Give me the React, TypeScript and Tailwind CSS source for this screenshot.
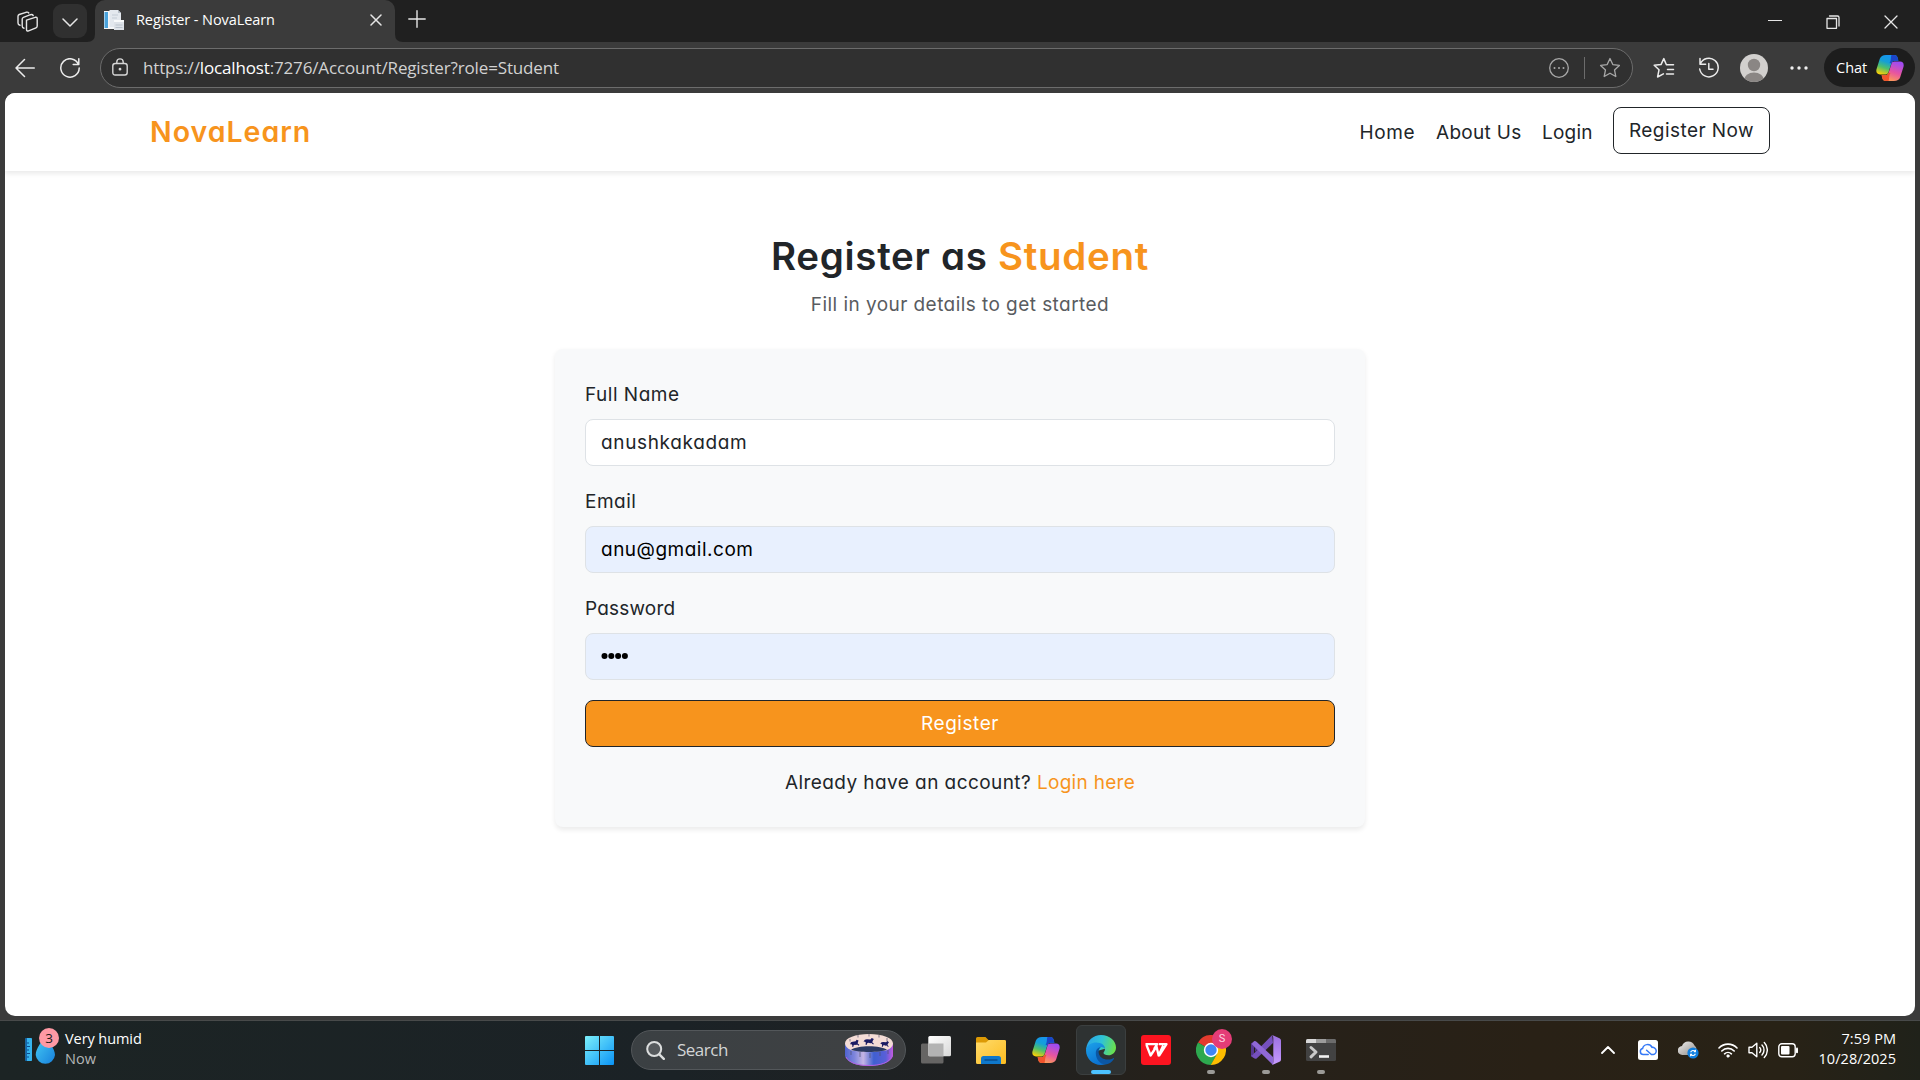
import React from "react";

const line = {
  fill: "none",
  stroke: "currentColor",
  strokeLinecap: "round" as const,
  strokeLinejoin: "round" as const,
};

function CopilotLogo({ id, className }: { id: string; className: string }) {
  const leg =
    "M10 0H18C20.3 0 21.2 1.2 21.7 3L22.4 5.8H18.6C16.8 5.8 15.8 6.8 15.3 8.4L12.6 17C12.1 18.6 11.2 19.4 9.8 19.4H4C.9 19.4 -.2 17.2 .5 14.2L3.8 3.8C4.7 1.3 6.8 0 10 0Z";
  return (
    <svg viewBox="0 0 28 26" className={className}>
      <defs>
        <linearGradient id={id + "a"} x1="0.6" y1="0" x2="0.2" y2="1">
          <stop offset="0" stopColor="#1793f0" />
          <stop offset="0.35" stopColor="#149fd8" />
          <stop offset="0.65" stopColor="#4fc06b" />
          <stop offset="1" stopColor="#ffd004" />
        </linearGradient>
        <linearGradient id={id + "b"} x1="0.4" y1="1" x2="0.8" y2="0">
          <stop offset="0" stopColor="#a04bf2" />
          <stop offset="0.5" stopColor="#e8559f" />
          <stop offset="1" stopColor="#ffa64d" />
        </linearGradient>
      </defs>
      <path d={leg} fill={`url(#${id}a)`} />
      <path d="M15.5 0H18C20.3 0 21.2 1.2 21.7 3L22.4 5.8H18.6C17 5.8 16 6.6 15.4 8.2L13.6 8C15.5 5 14.5 1.5 15.5 0Z" fill="#1b45c9" />
      <g transform="rotate(180 14 13)">
        <path d={leg} fill={`url(#${id}b)`} />
        <path d="M15.5 0H18C20.3 0 21.2 1.2 21.7 3L22.4 5.8H18.6C17 5.8 16 6.6 15.4 8.2L13.6 8C15.5 5 14.5 1.5 15.5 0Z" fill="#f2542d" />
      </g>
    </svg>
  );
}

function TabStrip() {
  return (
    <div className="flex h-[42px] items-start bg-[#202020] text-[#e6e6e6]">
      <svg viewBox="0 0 22 22" className="ml-[17px] mt-[11px] h-[22px] w-[22px]" {...line} strokeWidth="1.4">
        <path d="M9.5 9.2 18.2 6.3Q20.2 5.8 20.2 7.8V15Q20.2 16.3 19 16.8L11.6 19.8Q9.5 20.5 9.5 18.5Z" />
        <path d="M7 17.2Q5.2 16.8 5.2 15V8Q5.2 6.8 6.4 6.3L13.5 3.7Q15.6 3.2 16.2 4.6" />
        <path d="M3 14.3Q1 14 1 12V5.3Q1 4 2.2 3.5L9 1.3Q11 .8 11.8 2" />
      </svg>
      <div className="ml-[14px] mt-1 flex h-[34px] w-[34px] items-center justify-center rounded-[9px] bg-[#303030]">
        <svg viewBox="0 0 16 9" className="mt-[2px] h-[9px] w-4" {...line} strokeWidth="1.5">
          <path d="M1 1 8 8 15 1" />
        </svg>
      </div>
      <svg viewBox="0 0 8 8" className="h-2 w-2 self-end"><path d="M8 0V8H0Q8 8 8 0Z" fill="#3b3b3b" /></svg>
      <div className="flex h-[42px] w-[300px] rounded-t-[10px] bg-[#3b3b3b]">
        <svg viewBox="0 0 20 20" className="ml-[9px] mt-[10px] h-5 w-5">
          <path d="M0 1H12V19H0Z" fill="#f4f6f8" />
          <path d="M0.5 2H4V18H0.5Z" fill="#4aa3dc" />
          <path d="M5.5 0H14L17 3V17H5.5Z" fill="#e3e8ee" />
          <path d="M14 0V3H17Z" fill="#b7c0ca" />
          <path d="M8 5H14M8 8H13" stroke="#c3ccd6" />
          <path d="M10 10H20V20H10Z" fill="#dde2e8" />
          <path d="M10 10H20V12H10Z" fill="#f8fafb" />
          <path d="M11.5 15H18.5M11.5 17.5H18.5" stroke="#b9c2cc" />
        </svg>
        <div className="ml-3 mt-[10px] flex-1 whitespace-nowrap font-['Open_Sans',sans-serif] text-[14.5px] leading-5 tracking-[-0.08px] text-white">Register - NovaLearn</div>
        <svg viewBox="0 0 12 12" className="mr-[13px] mt-[14px] h-3 w-3" {...line} strokeWidth="1.5">
          <path d="M1 1 11 11M11 1 1 11" />
        </svg>
      </div>
      <svg viewBox="0 0 8 8" className="h-2 w-2 self-end"><path d="M0 0V8H8Q0 8 0 0Z" fill="#3b3b3b" /></svg>
      <svg viewBox="0 0 18 18" className="ml-[5px] mt-[10px] h-[18px] w-[18px]" {...line} strokeWidth="1.4">
        <path d="M9 .8V17.2M.8 9H17.2" />
      </svg>
      <div className="flex-1" />
      <svg viewBox="0 0 14 14" className="mr-[44px] mt-[14px] h-[14px] w-[14px]" {...line} strokeWidth="1.2"><path d="M.5 6.5H13.5" /></svg>
      <svg viewBox="0 0 14 14" className="mr-[44px] mt-[15px] h-[14px] w-[14px]" {...line} strokeWidth="1.3">
        <path d="M1 3.5H10.5V13.3H1ZM3.5 1H11.5Q13 1 13 2.5V11" />
      </svg>
      <svg viewBox="0 0 14 14" className="mr-[22px] mt-[15px] h-[14px] w-[14px]" {...line} strokeWidth="1.3"><path d="M1 1 13 13M13 1 1 13" /></svg>
    </div>
  );
}

const STAR = "M11 1.5 13.8 7.6 20.4 8.4 15.5 12.9 16.8 19.5 11 16.2 5.2 19.5 6.5 12.9 1.6 8.4 8.2 7.6Z";

function AddressBar() {
  return (
    <div className="flex h-[51px] items-center bg-[#3b3b3b] text-[#ececec]">
      <svg viewBox="0 0 20 20" className="ml-[15px] h-5 w-5" {...line} strokeWidth="1.5"><path d="M19.3 10H1M9.5 1.5 1 10 9.5 18.5" /></svg>
      <svg viewBox="0 0 20 20" className="ml-[25px] h-5 w-5" {...line} strokeWidth="1.5"><path d="M18.5 6.4A9.2 9.2 0 1 0 19.2 10M18.8 .8V6.4H13.2" /></svg>
      <div className="ml-5 flex h-10 w-[1533px] items-center rounded-full border border-[#6c6c6c] bg-[#303030] text-[#d6d6d6]">
        <svg viewBox="0 0 16 18" className="mb-[2px] ml-[11px] h-[18px] w-4" {...line} strokeWidth="1.4">
          <path d="M3.2 5.5H12.8Q15.2 5.5 15.2 8V14.5Q15.2 17 12.8 17H3.2Q.8 17 .8 14.5V8Q.8 5.5 3.2 5.5ZM4.8 5.5V4Q4.8 .9 8 .9T11.2 4V5.5" />
          <circle cx="8" cy="11.2" r="0.7" fill="currentColor" />
        </svg>
        <div className="ml-[15px] flex-1 whitespace-nowrap font-['Open_Sans',sans-serif] text-[17px] leading-6 tracking-[-0.15px] text-[#d2d2d2]">
          https://<span className="text-white">localhost</span>:7276/Account/Register?role=Student
        </div>
        <svg viewBox="0 0 20 20" className="h-5 w-5 text-[#a8a8a8]" {...line} strokeWidth="1.3">
          <circle cx="10" cy="10" r="9.3" />
          <path d="M5.5 10h.01M10 10h.01M14.5 10h.01" strokeWidth="2" />
        </svg>
        <div className="ml-[15px] h-[22px] w-px bg-[#6c6c6c]" />
        <svg viewBox="0 0 22 21" className="ml-[14px] mr-[11px] h-[21px] w-[22px] text-[#a8a8a8]" {...line} strokeWidth="1.3"><path d={STAR} /></svg>
      </div>
      <svg viewBox="0 0 22 22" className="ml-5 h-[22px] w-[22px]" {...line} strokeWidth="1.5">
        <path d="M13.6 7.8H20.5M14.5 12.4H20.5M13.5 17H20.5M13.4 7.8 10.8 1.6 8 7.6 1.2 8.3 6 12.8 4.6 20 10.4 16.8" />
      </svg>
      <svg viewBox="0 0 22 22" className="ml-[23px] h-[22px] w-[22px]" {...line} strokeWidth="1.5">
        <path d="M2.2 7.2A9.3 9.3 0 1 1 1.7 12M2 1.6V7.2H7.6M10.8 6.5V12.2H15" />
      </svg>
      <svg viewBox="0 0 28 28" className="ml-5 h-7 w-7">
        <clipPath id="avatar"><circle cx="14" cy="14" r="14" /></clipPath>
        <g clipPath="url(#avatar)">
          <rect width="28" height="28" fill="#d2d0ce" />
          <circle cx="14" cy="11" r="6.2" fill="#8a8684" />
          <ellipse cx="14" cy="26.5" rx="10" ry="8" fill="#8a8684" />
        </g>
      </svg>
      <svg viewBox="0 0 18 4" className="ml-[22px] h-1 w-[18px] fill-[#f0f0f0]"><circle cx="2" cy="2" r="1.7" /><circle cx="9" cy="2" r="1.7" /><circle cx="16" cy="2" r="1.7" /></svg>
      <div className="ml-4 flex h-[39px] w-[91px] items-center rounded-full bg-[#1d1d1d]">
        <span className="ml-3 w-10 font-['Open_Sans',sans-serif] text-[14.5px] text-white">Chat</span>
        <CopilotLogo id="chat" className="h-[26px] w-7" />
      </div>
    </div>
  );
}

function Navbar() {
  return (
    <nav className="flex h-[78px] items-start bg-white px-[145px] shadow-[0_2.5px_5px_rgba(0,0,0,0.09)]">
      <div className="mt-[20px] text-[28.5px] font-semibold leading-[38px] tracking-[1px] text-[#f7941d]">NovaLearn</div>
      <div className="ml-auto flex text-[19px] text-[#212529]">
        <span className="mt-[25px] w-[76.5px] leading-[30px] tracking-[0.6px]">Home</span>
        <span className="mt-[25px] w-[106px] leading-[30px] tracking-[0.3px]">About Us</span>
        <span className="mt-[25px] w-[71px] leading-[30px] tracking-[0.2px]">Login</span>
        <span className="mt-[14px] flex h-[47px] w-[157px] items-center justify-center rounded-[8px] border border-[#212529] pt-[2px] tracking-[0.45px]">Register Now</span>
      </div>
    </nav>
  );
}

function Field({ label, value, tracking, filled }: { label: string; value: string; tracking: string; filled?: boolean }) {
  return (
    <div className="mb-5">
      <div className={"mb-[9px] pt-px leading-[30px] " + (label === "Password" ? "tracking-[0.18px]" : "tracking-[0.5px]")}>{label}</div>
      <div className={"flex h-[47px] items-center rounded-[8px] border border-[#dee2e6] px-[15px] pt-[2px] " + tracking + (filled ? " bg-[#e8f0fe] text-black" : " bg-white")}>
        {value === "" ? (
          <svg viewBox="0 0 28 8" className="mb-[3px] h-2 w-7"><circle cx="3.5" cy="4" r="3" /><circle cx="10.3" cy="4" r="3" /><circle cx="17.1" cy="4" r="3" /><circle cx="23.9" cy="4" r="3" /></svg>
        ) : value}
      </div>
    </div>
  );
}

function RegisterPage() {
  return (
    <div className="mx-[5px] flex h-[923px] flex-col overflow-hidden rounded-[10px] bg-white font-[Inter,sans-serif] [font-feature-settings:'cv11'] font-[370]">
      <Navbar />
      <main className="flex flex-col items-center pt-[60px] text-[19px] text-[#212529]">
        <h1 className="mb-[9px] pt-px text-[38.5px] font-semibold leading-[48px] tracking-[0.7px]">
          Register as <span className="text-[#f7941d]">Student</span>
        </h1>
        <p className="mb-[29px] pt-px leading-[30px] tracking-[0.44px] text-[#595c5f]">Fill in your details to get started</p>
        <section className="w-[810px] rounded-[8px] bg-[#f8f9fa] p-[30px] shadow-[0_2.5px_5px_rgba(0,0,0,0.08)]">
          <Field label="Full Name" value="anushkakadam" tracking="tracking-[0.65px]" />
          <Field label="Email" value="anu@gmail.com" tracking="tracking-[0.5px]" filled />
          <Field label="Password" value="" tracking="" filled />
          <div className="mb-5 flex h-[47px] items-center justify-center rounded-[8px] border border-[#212529] bg-[#f7941d] pt-[2px] tracking-[0.55px] text-white">Register</div>
          <p className="-mb-px pt-px text-center leading-[30px] tracking-[0.43px]">
            Already have an account? <span className="tracking-[0.3px] text-[#f7941d]">Login here</span>
          </p>
        </section>
      </main>
    </div>
  );
}

function EdgeLogo() {
  return (
    <svg viewBox="0 0 30 30" className="h-[30px] w-[30px]">
      <defs>
        <linearGradient id="eg1" x1="0" y1="0.3" x2="1" y2="0.5"><stop offset="0" stopColor="#2aa5e8" /><stop offset="0.5" stopColor="#2fc3d6" /><stop offset="1" stopColor="#6be04c" /></linearGradient>
        <linearGradient id="eg2" x1="0.2" y1="0" x2="0.7" y2="1"><stop offset="0" stopColor="#1b9ee8" /><stop offset="1" stopColor="#0a6fd0" /></linearGradient>
      </defs>
      <path d="M.2 14C1 5.5 7.3 0 15 0 23.5 0 30 5.8 30 12.4 30 17 26.5 20.2 22.3 20.2 19.4 20.2 17.5 19.2 17.5 18.1 17.5 17 19 16.4 19 13.8L11 16Z" fill="url(#eg1)" />
      <path d="M.1 14C1.5 10 5.5 7.6 10.3 7.6 15.4 7.6 19 10.5 19 13.8 17.8 12.3 16 11.6 14.5 12 12 14 11.5 17 12.5 20L19.3 29.3C18 29.8 16.5 30 15 30 6 30-.8 22.5.1 14Z" fill="url(#eg2)" />
      <path d="M9.8 18.3C9.8 14.8 11.8 12.4 14.8 12 13.2 13.5 12.6 15.2 12.6 17 12.6 21.5 17 24.6 21.7 24.6 24.2 24.6 26 23.8 27.2 23.2 27.9 22.9 28.3 23.2 27.9 23.9 25.9 27 22.6 29.3 19.3 29.4 13.7 29.4 9.8 23.8 9.8 18.3Z" fill="#0b57a5" />
    </svg>
  );
}

function ChromeLogo() {
  return (
    <div className="relative h-[30px] w-[30px]">
      <svg viewBox="0 0 30 30" className="h-[30px] w-[30px]">
        <path d="M15 15 2 7.5A15 15 0 0 1 28 7.5Z" fill="#e33b2e" />
        <path d="M15 15 2 7.5A15 15 0 0 0 15 30L21.2 18.6Z" fill="#2da94f" />
        <path d="M15 8H28.3A15 15 0 0 1 14.8 30L21.2 18.5Z" fill="#fdbd00" />
        <path d="M15 8H28.3L28 7.5 15 7Z" fill="#e33b2e" />
        <circle cx="15" cy="15" r="7.2" fill="#fff" />
        <circle cx="15" cy="15" r="5.7" fill="#3f86f5" />
      </svg>
      <div className="absolute left-4 top-[-6px] flex h-5 w-5 items-center justify-center rounded-full bg-[#e43c77] font-[Roboto,sans-serif] text-[11px] text-[#ffd5e3]">S</div>
    </div>
  );
}

function VisualStudioLogo() {
  return (
    <svg viewBox="0 0 30 30" className="h-[30px] w-[30px]">
      <defs><linearGradient id="vsg" x1="0" y1="0" x2="0" y2="1"><stop offset="0" stopColor="#9a6fe0" /><stop offset="1" stopColor="#c79bff" /></linearGradient></defs>
      <path d="M0 8.2 3.2 6.4 9 12.2 4 17V12L3 13V17.5L5.5 20 3.2 23.2 0 21.5Z" fill="#54368f" />
      <path d="M21.2 0 22 8 5.6 23.5Q4 24.4 2.6 22.8L0 20.4 1.3 20.2Z" fill="#7550bd" />
      <path d="M3 6.2Q4.3 5.7 5.5 6.8L22 22V30L.6 9Z" fill="#8f68d6" />
      <path d="M21.2 0 28.5 3.3Q30 4 30 5.6V24.4Q30 26 28.5 26.7L21.2 30Q22.3 28.8 22.3 27V3Q22.3 1.2 21.2 0Z" fill="url(#vsg)" />
    </svg>
  );
}

function CarouselArt() {
  const horse = "M0 3.4 1.2 1.6 3 1.2 6 1.4 7.2 0 9 1 8.2 2.4 7.6 4 9 5.4 8.4 6.2 6.8 4.8 5.8 5 4.6 4.6 3.4 4.8 2.6 6.6 1.8 6.4 2 4.4 1.4 3.6Z";
  return (
    <svg viewBox="0 0 48 32" className="h-8 w-12">
      <defs>
        <linearGradient id="ring"><stop offset="0" stopColor="#4f63d0" /><stop offset="0.2" stopColor="#7f86dc" /><stop offset="0.38" stopColor="#c5b5e4" /><stop offset="0.6" stopColor="#3f5fd0" /><stop offset="0.85" stopColor="#5a5fd8" /><stop offset="1" stopColor="#c25be0" /></linearGradient>
      </defs>
      <path d="M0 9V22C2 28.5 12 32 24 32S46 28.5 48 22V9Z" fill="url(#ring)" />
      <path d="M1 23C4 29 13 31.5 24 31.5S44 29 47.3 22" fill="none" stroke="#b55fe0" strokeWidth="1" />
      <path d="M0 9.3C0 4 10.5 0 24 0S48 4 48 9.3C48 12 46 14.6 42 16 36 18.4 12 18.4 6 16 2 14.6 0 12 0 9.3Z" fill="#f4dcd6" />
      <path d="M6 15.8C12 11 36 11 42 15.8 35 18.8 13 18.8 6 15.8Z" fill="#2b3a63" />
      <path d="M13 1V3.5M24 0V2.5M34 1V3.5M42 4V7M5 5V7.5M6 17V21M15 18V23M25 19V24M35 18V22M43 16V20" stroke="#50506e" strokeWidth="0.7" />
      <g fill="#1b1b63">
        <path d={horse} transform="translate(4.5 7) rotate(-10)" />
        <path d={horse} transform="translate(18.5 4) scale(1.15 1.05)" />
        <path d={horse} transform="translate(35.5 6.6) rotate(4) scale(0.95)" />
      </g>
    </svg>
  );
}

function Slot({ children, active, mark }: { children: React.ReactNode; active?: boolean; mark?: boolean }) {
  return (
    <div className={"relative mr-[5px] flex h-[50px] w-[50px] items-center justify-center rounded-[6px] border " + (active ? "border-[#3b3f3f] bg-[#2e3232]" : "border-transparent")}>
      {children}
      {active && <span className="absolute bottom-0 h-1 w-5 rounded-full bg-[#4cc2ff]" />}
      {mark && <span className="absolute bottom-0 h-1 w-2 rounded-full bg-[#9b9a97]" />}
    </div>
  );
}

function Taskbar() {
  return (
    <div className="flex h-[60px] items-center border-t border-[#484a4a] bg-[linear-gradient(90deg,#1c2424_0%,#1b2226_35%,#1f2122_50%,#25211b_60%,#292116_80%,#282216_93%,#20221a_100%)] pb-px font-['Open_Sans',sans-serif] text-[14.5px] leading-5 text-white">
      <div className="flex w-[585px] items-center">
        <div className="relative ml-[25px] h-[38px] w-[35px]">
          <svg viewBox="0 0 35 38" className="h-[38px] w-[35px]">
            <defs><linearGradient id="drop" x1="0" y1="0" x2="1" y2="1"><stop offset="0" stopColor="#46cdf5" /><stop offset="1" stopColor="#1780dc" /></linearGradient></defs>
            <rect x="0.5" y="7" width="6.5" height="23" rx="0.8" fill="#36b4ee" />
            <path d="M.5 7H2V30H.5Z" fill="#1465ad" />
            <path d="M2 12H4M2 15.5H5M2 19H4M2 22.5H5M2 26H4" stroke="#0d4f8f" strokeWidth="1" />
            <path d="M20.5 5C23 10 30 17.5 30 24A9.7 9.7 0 0 1 10.7 24C10.7 17.5 17 10 20.5 5Z" fill="url(#drop)" />
          </svg>
          <div className="absolute left-[14px] top-[-3px] flex h-5 w-5 items-center justify-center rounded-full bg-[#ff99a4] text-[13.5px] text-[#1b1b1b]">3</div>
        </div>
        <div className="mb-[2px] ml-[5px] whitespace-nowrap">
          <div className="tracking-[-0.08px]">Very humid</div>
          <div className="text-[#b4b6b6]">Now</div>
        </div>
      </div>
      <svg viewBox="0 0 29 29" className="h-[29px] w-[29px]">
        <defs><linearGradient id="win" x1="0" y1="0" x2="1" y2="1"><stop offset="0" stopColor="#7cf0fb" /><stop offset="1" stopColor="#0a93f6" /></linearGradient></defs>
        <path d="M0 1Q0 0 1 0H14V14H0ZM15 0H28Q29 0 29 1V14H15ZM0 15H14V29H1Q0 29 0 28ZM15 15H29V28Q29 29 28 29H15Z" fill="url(#win)" />
      </svg>
      <div className="ml-[17px] flex h-10 w-[275px] items-center rounded-full border border-[#53575a] bg-[linear-gradient(90deg,#3b4043,#3f4143)]">
        <svg viewBox="0 0 19 19" className="ml-[14px] h-[19px] w-[19px] text-[#dcdede]" {...line} strokeWidth="2"><circle cx="8.2" cy="8" r="7" fill="#565a5d" /><path d="m13.3 13.3 4.5 4.5" strokeWidth="2.4" /></svg>
        <span className="ml-3 flex-1 text-[17px] leading-6 tracking-[-0.5px] text-[#d3d5d6]">Search</span>
        <div className="mr-3"><CarouselArt /></div>
      </div>
      <div className="ml-[5px] flex">
        <Slot>
          <svg viewBox="0 0 30 28" className="h-7 w-[30px]">
            <defs><linearGradient id="tv" x1="0" y1="0" x2="1" y2="1"><stop offset="0" stopColor="#fff" /><stop offset="1" stopColor="#d8d8d8" /></linearGradient></defs>
            <rect x="0" y="7.5" width="22.5" height="20" rx="1.5" fill="#666564" />
            <rect x="7.3" y="0" width="22.7" height="20.3" rx="1.5" fill="url(#tv)" />
            <path d="M7.3 7.5H22.5V20.3H8.5Q7.3 20.3 7.3 19Z" fill="#b3b3b3" />
          </svg>
        </Slot>
        <Slot>
          <svg viewBox="0 0 30 27" className="h-[27px] w-[30px]">
            <defs><linearGradient id="fold" x1="0" y1="0" x2="1" y2="1"><stop offset="0" stopColor="#ffdb6b" /><stop offset="1" stopColor="#fcbc20" /></linearGradient></defs>
            <path d="M0 1.5Q0 0 1.5 0H9.5L12.5 3H28.5Q30 3 30 4.5V12H0Z" fill="#dd9a05" />
            <path d="M0 5.5H10L12.8 3H28.5Q30 3 30 4.5V25.5Q30 27 28.5 27H1.5Q0 27 0 25.5Z" fill="url(#fold)" />
            <path d="M5 27V21.5Q5 19 7.5 19H22.5Q25 19 25 21.5V27Z" fill="#0f78cb" />
            <path d="M9 23H21" stroke="#0a4e8e" strokeWidth="1.4" strokeLinecap="round" />
          </svg>
        </Slot>
        <Slot><CopilotLogo id="task" className="h-[26px] w-7" /></Slot>
        <Slot active><EdgeLogo /></Slot>
        <Slot>
          <svg viewBox="0 0 30 30" className="h-[30px] w-[30px]">
            <rect width="30" height="30" rx="3" fill="#fc1420" />
            <path d="M4.5 9.2H16.2L13 14.2M5.5 10 9.6 20.5 15.5 11.5 17.6 20.5 22.2 10.6M17.8 9.2H25.5L18 21" fill="none" stroke="#fff" strokeWidth="2.3" strokeLinejoin="round" />
          </svg>
        </Slot>
        <Slot mark><ChromeLogo /></Slot>
        <Slot mark><VisualStudioLogo /></Slot>
        <Slot mark>
          <svg viewBox="0 0 30 22" className="h-[22px] w-[30px]">
            <rect width="30" height="22" rx="1.5" fill="#424242" />
            <path d="M0 1.5Q0 0 1.5 0H10V4H0Z" fill="#d8d8d8" />
            <path d="M10 0H20V4H10Z" fill="#9c9c9c" />
            <path d="M20 0H28.5Q30 0 30 1.5V4H20Z" fill="#6c6c6c" />
            <path d="m5 8.5 5 4.5-5 4.8" fill="none" stroke="#c9c9c9" strokeWidth="3" strokeLinejoin="round" strokeLinecap="round" />
            <path d="M13 17.5H23" stroke="#f2f2f2" strokeWidth="2.6" />
          </svg>
        </Slot>
      </div>
      <div className="ml-auto flex items-center">
        <svg viewBox="0 0 14 8" className="mr-[23px] h-2 w-[14px]" {...line} strokeWidth="1.8"><path d="M1 7 7 1 13 7" /></svg>
        <svg viewBox="0 0 20 20" className="mr-5 h-5 w-5">
          <rect width="20" height="20" rx="2.5" fill="#fff" />
          <path d="M10.2 14.5H5.2A3 3 0 0 1 4.6 8.6 5 5 0 0 1 14 7.4 3.6 3.6 0 0 1 15.2 14.5H13.4L8.6 10.2" fill="none" stroke="#3478f6" strokeWidth="1.5" strokeLinecap="round" strokeLinejoin="round" />
        </svg>
        <svg viewBox="0 0 21 18" className="mr-[19px] h-[18px] w-[21px]">
          <defs><linearGradient id="od" x1="0" y1="0" x2="1" y2="1"><stop offset="0" stopColor="#efefef" /><stop offset="1" stopColor="#8f8b86" /></linearGradient></defs>
          <path d="M4.5 14A4.5 4.5 0 0 1 4 5 6.8 6.8 0 0 1 16.5 4.5Q19 6 18.5 10L14 14Z" fill="url(#od)" />
          <circle cx="15" cy="12" r="5.6" fill="#0f7fe0" />
          <path d="M12.6 11.2A2.8 2.8 0 0 1 17.3 10.4M17.4 8.8V10.6H15.8M17.4 12.8A2.8 2.8 0 0 1 12.7 13.6M12.6 15.2V13.4H14.2" fill="none" stroke="#fff" strokeWidth="1.1" />
        </svg>
        <svg viewBox="0 0 20 16" className="mr-[10px] h-4 w-5" {...line} strokeWidth="1.6">
          <path d="M1 6A12.5 12.5 0 0 1 19 6M3.8 9A8.7 8.7 0 0 1 16.2 9M6.6 11.8A4.9 4.9 0 0 1 13.4 11.8" />
          <circle cx="10" cy="14" r="1.2" fill="currentColor" strokeWidth="0.8" />
        </svg>
        <svg viewBox="0 0 20 18" className="mr-[10px] h-[18px] w-5" {...line} strokeWidth="1.4">
          <path d="M1 6.3H4L8.8 2.3V15.7L4 11.7H1ZM11.7 6.5A3.8 3.8 0 0 1 11.7 11.5M14 4A7.2 7.2 0 0 1 14 14M16.3 1.5A10.8 10.8 0 0 1 16.3 16.5" />
        </svg>
        <svg viewBox="0 0 21 15" className="h-[15px] w-[21px]" {...line} strokeWidth="1.4">
          <rect x="0.8" y="0.8" width="16.4" height="13" rx="3" />
          <rect x="3" y="3" width="8.5" height="8.6" rx="1" fill="currentColor" stroke="none" />
          <path d="M19 5.5V9.2" strokeWidth="2" />
        </svg>
        <div className="mb-[2px] mr-[24px] w-[97px] text-right tracking-[0.05px]">
          <div>7:59 PM</div>
          <div>10/28/2025</div>
        </div>
      </div>
    </div>
  );
}

export default function App() {
  return (
    <div className="flex h-[1080px] w-[1920px] flex-col overflow-hidden bg-[#3b3b3b]">
      <TabStrip />
      <AddressBar />
      <RegisterPage />
      <div className="h-1" />
      <Taskbar />
    </div>
  );
}
